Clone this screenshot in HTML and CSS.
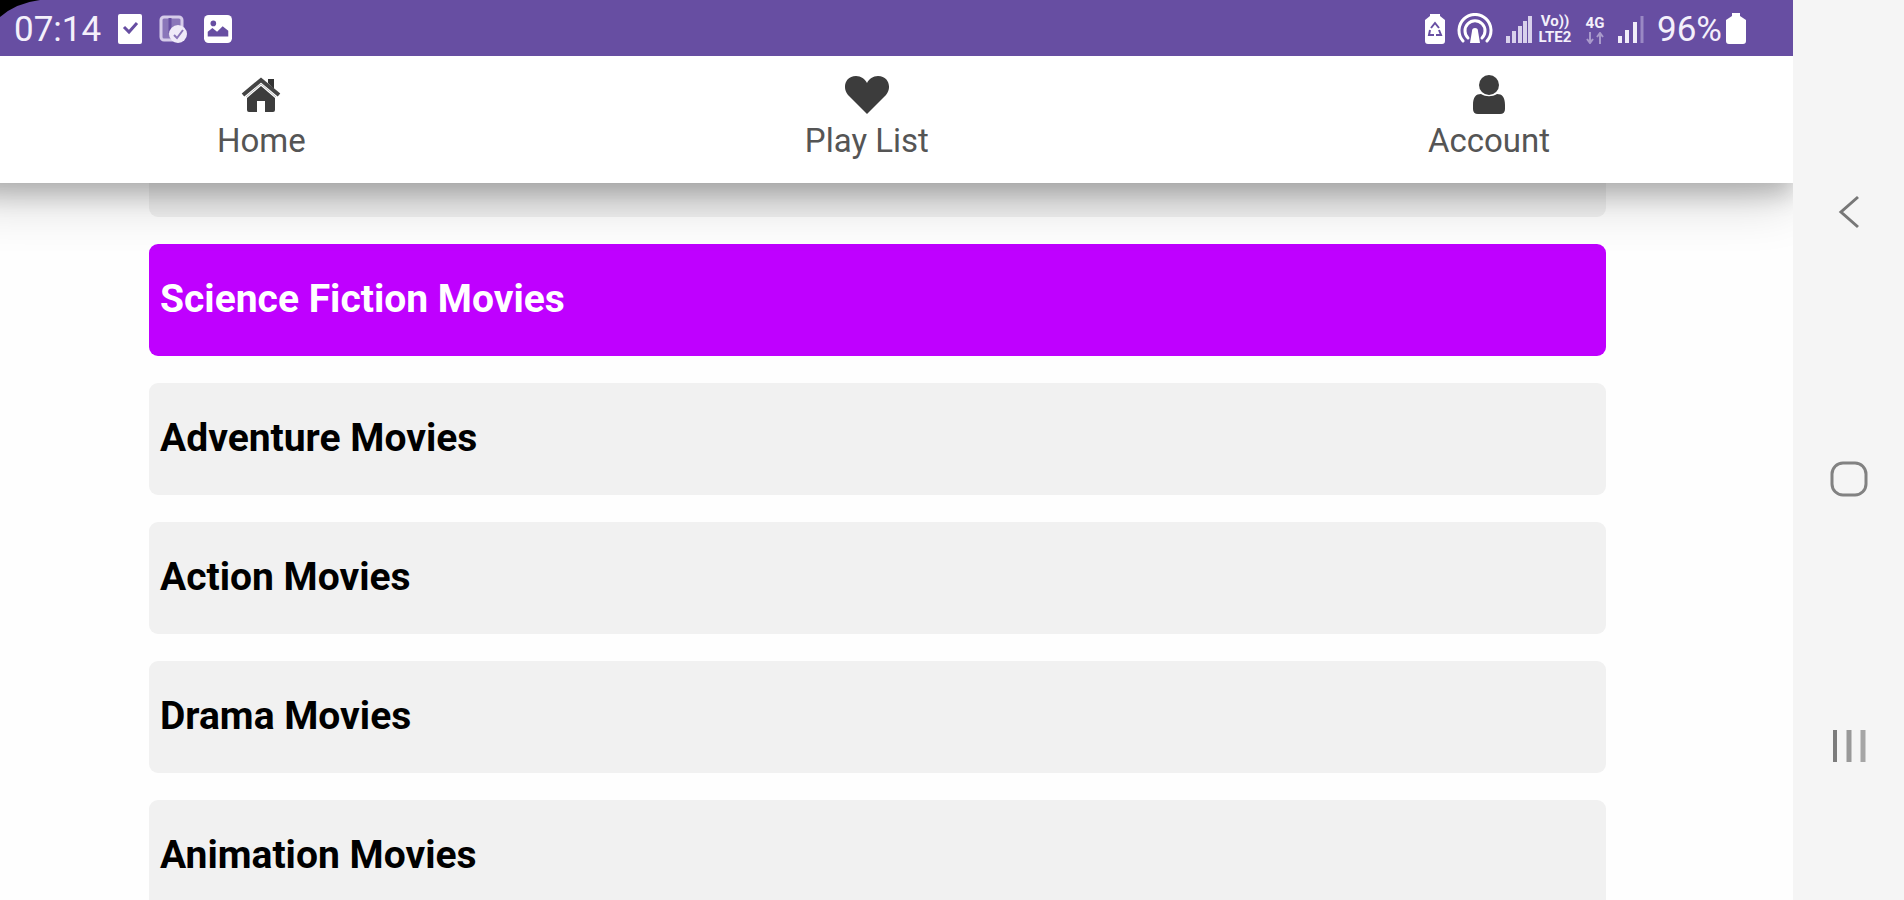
FILE: index.html
```html
<!DOCTYPE html>
<html lang="en">
<head>
    <meta charset="UTF-8">
    <meta name="viewport" content="width=device-width, initial-scale=1.0">
    <title>Movies</title>
    <link rel="stylesheet" href="styles.css">
</head>
<body>
    <div class="screen">
        <div class="status">
            <div class="left">
                <span class="time">07:14</span>
                <svg width="24" height="30" viewBox="0 0 24 30">
                    <rect width="24" height="30" rx="2" fill="#fff"/>
                    <path d="M6 13l5 5 8-9" fill="none" stroke="#674ea2" stroke-width="3"/>
                </svg>
                <svg width="28" height="28" viewBox="0 0 28 28">
                    <rect x="2" y="2" width="21" height="23" rx="3" fill="#8a76b9" stroke="#d5cbe9" stroke-width="3"/>
                    <path d="M11 3v15" stroke="#674ea2" stroke-width="3"/>
                    <circle cx="19" cy="19" r="9" fill="#efeaf8"/>
                    <path d="M15 20l3 3 6-8" fill="none" stroke="#8a76b9" stroke-width="2"/>
                </svg>
                <svg width="28" height="30" viewBox="0 0 30 30">
                    <rect width="30" height="30" rx="5" fill="#fff"/>
                    <circle cx="10" cy="9" r="3" fill="#674ea2"/>
                    <path d="M4 23v-5l5-4 5 4 6-6 6 5v6z" fill="#674ea2"/>
                </svg>
            </div>
            <div class="right">
                <svg width="20" height="30" viewBox="0 0 20 30">
                    <path d="M5 0h10v2l5 4v21q0 3-3 3H3q-3 0-3-3V6l5-4z" fill="#fff"/>
                    <path d="M6 14l4-5 4 5M5 16l-1 5h5M11 21h5l-2-5" fill="none" stroke="#674ea2" stroke-width="2"/>
                </svg>
                <svg width="36" height="32" viewBox="0 0 36 32">
                    <g fill="none" stroke="#fff" stroke-width="3" stroke-linecap="round">
                        <path d="M6 28a16 16 0 1 1 24 0"/>
                        <path d="M11 25a10 10 0 1 1 14 0"/>
                    </g>
                    <path d="M13 30l2-12a3 3 0 0 1 6 0l2 12z" fill="#fff"/>
                </svg>
                <svg width="28" height="28" viewBox="0 0 28 28">
                    <path d="M3 28v-7M9 28v-12M15 28v-17M20 28v-22M25 28V1" stroke="#d9d1ec" stroke-width="4"/>
                </svg>
                <span class="volte"><span>Vo))</span><span>LTE2</span></span>
                <span class="net">
                    <span>4G</span>
                    <svg width="20" height="12" viewBox="0 0 20 12">
                        <path d="M5 0v10M2 7l3 4 3-4M15 12V2M12 5l3-4 3 4" fill="none" stroke="#a99acb" stroke-width="2"/>
                    </svg>
                </span>
                <svg width="28" height="28" viewBox="0 0 28 28">
                    <path d="M3 28v-7M10 28v-13M18 28V7" stroke="#f1edf9" stroke-width="4"/>
                    <path d="M25 28V1" stroke="#9a89c4" stroke-width="3"/>
                </svg>
                <span class="percent">96%</span>
                <svg width="20" height="32" viewBox="0 0 20 32">
                    <path d="M6 0h8v3l6 4v21q0 3-3 3H3q-3 0-3-3V7l6-4z" fill="#fff"/>
                </svg>
            </div>
            <svg class="corner" width="44" height="18" viewBox="0 0 44 18">
                <path d="M0 0h40Q16 3 0 17z" fill="#000"/>
            </svg>
        </div>

        <nav class="navbar">
            <a href="#home">
                <svg width="40" height="36" viewBox="0 0 40 36">
                    <path d="M27 2h6v10l-6-6z" fill="#333"/>
                    <path d="M6 21L20 9l14 12v12q0 2-2 2h-8V24h-8v11H8q-2 0-2-2z" fill="#3c3c3c"/>
                    <path d="M2 18L20 3l18 15" fill="none" stroke="#444" stroke-width="4"/>
                    <path d="M5 20L20 7l15 13" fill="none" stroke="#bbb" stroke-width="1"/>
                </svg>
                <span>Home</span>
            </a>
            <a href="#playlist">
                <svg width="46" height="40" viewBox="0 0 46 40">
                    <path d="M23 39L4 20C-2 13 1 1 12 1c5 0 9 3 11 7 2-4 6-7 11-7 11 0 14 12 8 19z" fill="#3c3c3c"/>
                </svg>
                <span>Play List</span>
            </a>
            <a href="#account">
                <svg width="34" height="40" viewBox="0 0 34 40">
                    <circle cx="17" cy="10" r="10" fill="#3c3c3c"/>
                    <path d="M1 30c0-8 3-11 8-11 5 3 11 3 16 0 5 0 8 3 8 11v4q0 5-5 5H6q-5 0-5-5z" fill="#3c3c3c"/>
                </svg>
                <span>Account</span>
            </a>
        </nav>

        <main class="list">
            <div class="card"></div>
            <button class="card active">Science Fiction Movies</button>
            <button class="card">Adventure Movies</button>
            <button class="card">Action Movies</button>
            <button class="card">Drama Movies</button>
            <button class="card">Animation Movies</button>
        </main>
    </div>

    <div class="softkeys">
        <button aria-label="Back">
            <svg width="36" height="38" viewBox="0 0 36 38">
                <path d="M27 4L10 19l17 15" fill="none" stroke="#777" stroke-width="3"/>
            </svg>
        </button>
        <button aria-label="Home">
            <svg width="38" height="38" viewBox="0 0 38 38">
                <rect x="2" y="3" width="34" height="32" rx="11" fill="none" stroke="#828282" stroke-width="3"/>
            </svg>
        </button>
        <button aria-label="Recent apps">
            <svg width="36" height="38" viewBox="0 0 36 38">
                <path d="M4 3v32" stroke="#7c7c7c" stroke-width="4"/>
                <path d="M18 3v32" stroke="#999" stroke-width="5"/>
                <path d="M32 3v32" stroke="#a6a6a6" stroke-width="5"/>
            </svg>
        </button>
    </div>
</body>
</html>
```
FILE: styles.css
```css
* {
    box-sizing: border-box;
}
body {
    margin: 0;
    display: flex;
    height: 100vh;
    overflow: hidden;
    font-family: Roboto, sans-serif;
    background-color: #fefefe;
}
svg {
    display: block;
    flex-shrink: 0;
}
button {
    border: none;
    font-family: inherit;
    cursor: pointer;
}
.screen {
    flex: 1;
    overflow: hidden;
}

/* status bar */
.status {
    position: relative;
    z-index: 3;
    display: flex;
    justify-content: space-between;
    height: 56px;
    padding: 2px 47px 0 14px;
    background-color: #674ea2;
    color: #f4f0fb;
    font-size: 35px;
}
.left, .right {
    display: flex;
    align-items: center;
}
.left {
    gap: 17px;
}
.right {
    gap: 12px;
}
.percent {
    margin-right: -8px;
}
.volte, .net {
    display: flex;
    flex-direction: column;
    align-items: center;
    font-size: 15px;
    font-weight: 700;
    line-height: 16px;
}
.volte {
    width: 36px;
    margin-left: -8px;
}
.net {
    gap: 1px;
}
.corner {
    position: absolute;
    top: 0;
    left: 0;
}

/* top menu, runs past the left edge so its shadow does not fade there */
.navbar {
    position: relative;
    z-index: 2;
    display: flex;
    justify-content: space-between;
    height: 127px;
    margin-left: -40px;
    padding: 19px 243px 0 257px;
    background-color: #fff;
    box-shadow: 0 11px 22px rgba(0, 0, 0, 0.2), 0 16px 54px rgba(0, 0, 0, 0.19);
}
.navbar a {
    display: flex;
    flex-direction: column;
    align-items: center;
    gap: 4px;
    color: #555;
    font-size: 33px;
    line-height: 44px;
    text-decoration: none;
}
.navbar svg {
    height: 40px;
}

/* categories, scrolled under the menu */
.list {
    display: flex;
    flex-direction: column;
    gap: 27px;
    margin: -78px 187px 0 149px;
}
.card {
    flex-shrink: 0;
    height: 112px;
    padding: 0 11px 2px;
    border-radius: 9px;
    background-color: #f1f1f1;
    color: #000;
    font-size: 39px;
    font-weight: 700;
    text-align: left;
}
.active {
    background-color: #bf00ff;
    color: #fff;
}

/* system buttons */
.softkeys {
    display: flex;
    flex-direction: column;
    align-items: center;
    justify-content: space-between;
    width: 111px;
    padding: 193px 0 135px;
    background-color: #f5f5f5;
}
.softkeys button {
    padding: 0;
    background: none;
}
```
